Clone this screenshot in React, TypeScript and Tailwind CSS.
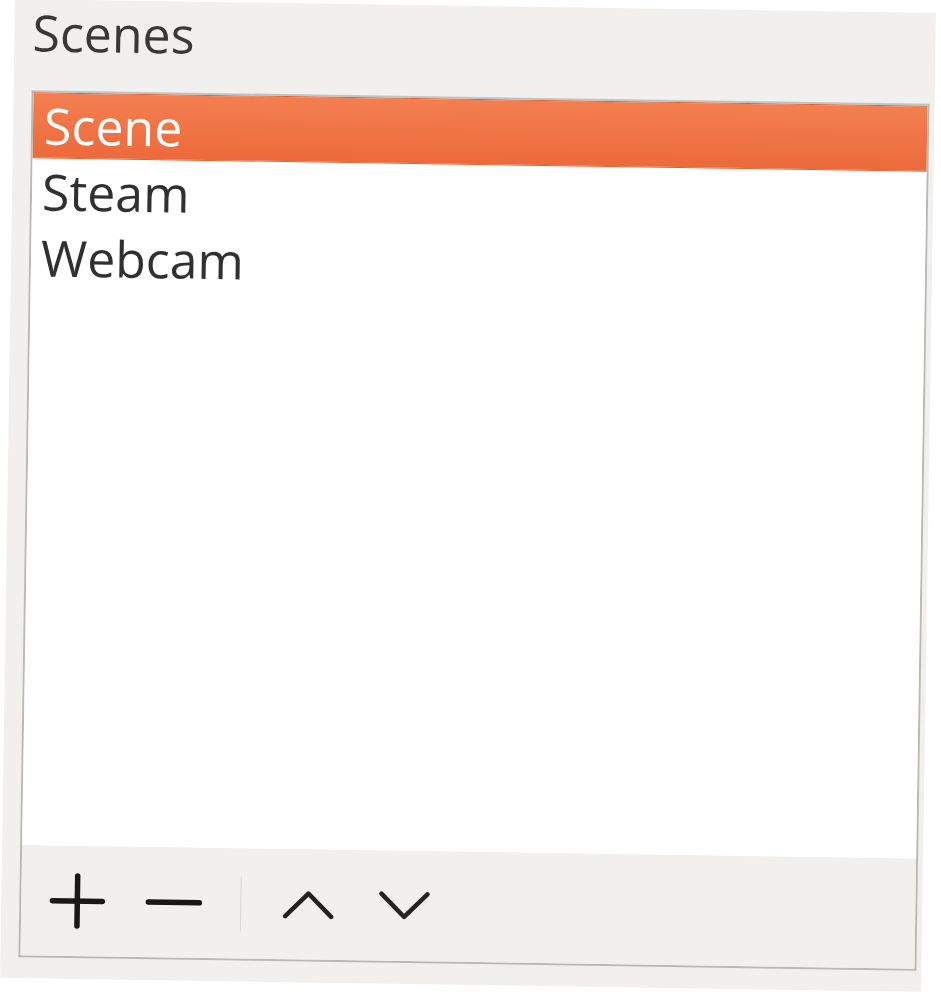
const scenes = ['Scene', 'Steam', 'Webcam'];

function PlusIcon() {
  return (
    <svg width="56" height="56" viewBox="0 0 56 56" fill="none" stroke="#181818" strokeWidth="5.5" strokeLinecap="round">
      <line x1="3" y1="28" x2="53" y2="28" />
      <line x1="28" y1="3" x2="28" y2="53" />
    </svg>
  );
}

function MinusIcon() {
  return (
    <svg width="57" height="56" viewBox="0 0 57 56" fill="none" stroke="#181818" strokeWidth="5.5" strokeLinecap="round">
      <line x1="3" y1="28" x2="54" y2="28" />
    </svg>
  );
}

function ChevronIcon({ up }: { up?: boolean }) {
  return (
    <svg width="52" height="32" viewBox="0 0 52 32" fill="none" stroke="#222" strokeWidth="4.5" strokeLinecap="round" strokeLinejoin="round">
      <path d={up ? 'M3 28 26 5l23 23' : 'M3 4l23 23L49 4'} />
    </svg>
  );
}

export default function App() {
  return (
    <div className="h-[1000px] w-[941px] overflow-hidden bg-white font-['Open_Sans',sans-serif]">
      <div className="ml-[7px] mt-[6px] h-[979px] w-[921px] origin-[467px_524px] rotate-[0.87deg] bg-[#f1f0ee] pl-[18px] pt-[5px]">
        <div className="h-[56px] text-[50px] leading-[56px] text-[#383838]">Scenes</div>

        <div className="mt-[30px] flex h-[867px] w-[898px] flex-col border-2 border-[#bbb9b4] border-t-[#bcc6c9]">
          <div className="flex-1 bg-white">
            {scenes.map((name, i) => (
              <div
                key={name}
                className={
                  i === 0
                    ? 'h-[66px] border-y border-[#e2602d] bg-gradient-to-b from-[#f37f50] to-[#ec6a3b] px-[11px] text-[50px] leading-[64px] text-white'
                    : 'h-[66px] px-[10px] text-[50px] leading-[66px] text-[#303030]'
                }
              >
                {name}
              </div>
            ))}
          </div>

          <div className="flex h-[110px] items-center bg-[#f1f0ee] pl-[8px]">
            <button className="flex h-[96px] w-[96px] items-center justify-center">
              <PlusIcon />
            </button>
            <button className="flex h-[96px] w-[96px] items-center justify-center">
              <MinusIcon />
            </button>
            <div className="mx-[19px] h-[55px] w-px bg-[#d8d6d2]" />
            <button className="flex h-[96px] w-[96px] items-center justify-center">
              <ChevronIcon up />
            </button>
            <button className="flex h-[96px] w-[96px] items-center justify-center">
              <ChevronIcon />
            </button>
          </div>
        </div>
      </div>
    </div>
  );
}
